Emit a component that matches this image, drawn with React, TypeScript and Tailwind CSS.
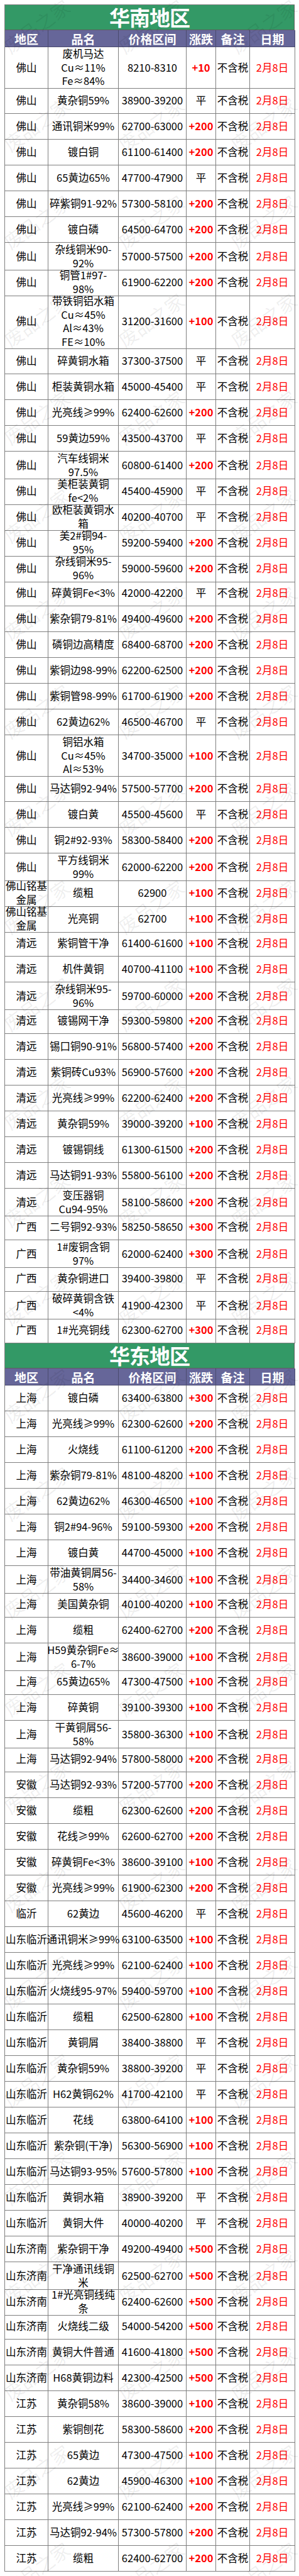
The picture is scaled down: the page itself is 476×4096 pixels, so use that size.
import React from "react";

type Row = [string, string, string, string, number?];

const south: Row[] = [
  ["佛山", "废机马达\nCu≈11%\nFe≈84%", "8210-8310", "+10", 3],
  ["佛山", "黄杂铜59%", "38900-39200", "平"],
  ["佛山", "通讯铜米99%", "62700-63000", "+200"],
  ["佛山", "镀白铜", "61100-61400", "+200"],
  ["佛山", "65黄边65%", "47700-47900", "平"],
  ["佛山", "碎紫铜91-92%", "57300-58100", "+200"],
  ["佛山", "镀白磷", "64500-64700", "+200"],
  ["佛山", "杂线铜米90-\n92%", "57000-57500", "+200"],
  ["佛山", "铜管1#97-\n98%", "61900-62200", "+200"],
  ["佛山", "带铁铜铝水箱\nCu≈45%\nAl≈43%\nFE≈10%", "31200-31600", "+100", 4],
  ["佛山", "碎黄铜水箱", "37300-37500", "平"],
  ["佛山", "柜装黄铜水箱", "45000-45400", "平"],
  ["佛山", "光亮线≥99%", "62400-62600", "+200"],
  ["佛山", "59黄边59%", "43500-43700", "平"],
  ["佛山", "汽车线铜米\n97.5%", "60800-61400", "+200"],
  ["佛山", "美柜装黄铜\nfe<2%", "45400-45900", "平"],
  ["佛山", "欧柜装黄铜水\n箱", "40200-40700", "平"],
  ["佛山", "美2#铜94-\n95%", "59200-59400", "+200"],
  ["佛山", "杂线铜米95-\n96%", "59000-59600", "+200"],
  ["佛山", "碎黄铜Fe<3%", "42000-42200", "平"],
  ["佛山", "紫杂铜79-81%", "49400-49600", "+200"],
  ["佛山", "磷铜边高精度", "68400-68700", "+200"],
  ["佛山", "紫铜边98-99%", "62200-62500", "+200"],
  ["佛山", "紫铜管98-99%", "61700-61900", "+200"],
  ["佛山", "62黄边62%", "46500-46700", "平"],
  ["佛山", "铜铝水箱\nCu≈45%\nAl≈53%", "34700-35000", "+100", 3],
  ["佛山", "马达铜92-94%", "57500-57700", "+200"],
  ["佛山", "镀白黄", "45500-45600", "平"],
  ["佛山", "铜2#92-93%", "58300-58400", "+200"],
  ["佛山", "平方线铜米\n99%", "62000-62200", "+200"],
  ["佛山铭基\n金属", "缆粗", "62900", "+100"],
  ["佛山铭基\n金属", "光亮铜", "62700", "+100"],
  ["清远", "紫铜管干净", "61400-61600", "+100"],
  ["清远", "机件黄铜", "40700-41100", "+100"],
  ["清远", "杂线铜米95-\n96%", "59700-60000", "+200"],
  ["清远", "镀锡网干净", "59300-59800", "+200"],
  ["清远", "锡口铜90-91%", "56800-57400", "+200"],
  ["清远", "紫铜砖Cu93%", "56900-57600", "+200"],
  ["清远", "光亮线≥99%", "62200-62400", "+200"],
  ["清远", "黄杂铜59%", "39000-39200", "+100"],
  ["清远", "镀锡铜线", "61300-61500", "+200"],
  ["清远", "马达铜91-93%", "55800-56100", "+200"],
  ["清远", "变压器铜\nCu94-95%", "58100-58600", "+200"],
  ["广西", "二号铜92-93%", "58250-58650", "+300"],
  ["广西", "1#废铜含铜\n97%", "62000-62400", "+300"],
  ["广西", "黄杂铜进口", "39400-39800", "平"],
  ["广西", "破碎黄铜含铁\n<4%", "41900-42300", "平"],
  ["广西", "1#光亮铜线", "62300-62700", "+300"],
];

const east: Row[] = [
  ["上海", "镀白磷", "63400-63800", "+300"],
  ["上海", "光亮线≥99%", "62300-62600", "+200"],
  ["上海", "火烧线", "61100-61200", "+200"],
  ["上海", "紫杂铜79-81%", "48100-48200", "+100"],
  ["上海", "62黄边62%", "46300-46500", "+100"],
  ["上海", "铜2#94-96%", "59100-59300", "+200"],
  ["上海", "镀白黄", "44700-45000", "+100"],
  ["上海", "带油黄铜屑56-\n58%", "34400-34600", "+100"],
  ["上海", "美国黄杂铜", "40100-40200", "+100"],
  ["上海", "缆粗", "62400-62700", "+200"],
  ["上海", "H59黄杂铜Fe≈\n6-7%", "38600-39000", "+100"],
  ["上海", "65黄边65%", "47300-47500", "+100"],
  ["上海", "碎黄铜", "39100-39300", "+100"],
  ["上海", "干黄铜屑56-\n58%", "35800-36300", "+100"],
  ["上海", "马达铜92-94%", "57800-58000", "+200"],
  ["安徽", "马达铜92-93%", "57200-57700", "+200"],
  ["安徽", "缆粗", "62300-62600", "+200"],
  ["安徽", "花线≥99%", "62600-62700", "+200"],
  ["安徽", "碎黄铜Fe<3%", "38600-39100", "+100"],
  ["安徽", "光亮线≥99%", "61900-62300", "+200"],
  ["临沂", "62黄边", "45600-46200", "平"],
  ["山东临沂", "通讯铜米≥99%", "63100-63500", "+100"],
  ["山东临沂", "光亮线≥99%", "62100-62400", "+100"],
  ["山东临沂", "火烧线95-97%", "59400-59700", "+100"],
  ["山东临沂", "缆粗", "62500-62800", "+100"],
  ["山东临沂", "黄铜屑", "38400-38800", "平"],
  ["山东临沂", "黄杂铜59%", "38800-39200", "平"],
  ["山东临沂", "H62黄铜62%", "41700-42100", "平"],
  ["山东临沂", "花线", "63800-64100", "+100"],
  ["山东临沂", "紫杂铜(干净)", "56300-56900", "+100"],
  ["山东临沂", "马达铜93-95%", "57600-57800", "+100"],
  ["山东临沂", "黄铜水箱", "38900-39200", "平"],
  ["山东临沂", "黄铜大件", "40000-40200", "平"],
  ["山东济南", "紫杂铜干净", "49200-49400", "+500"],
  ["山东济南", "干净通讯线铜\n米", "62500-62700", "+500"],
  ["山东济南", "1#光亮铜线纯\n条", "62400-62600", "+500"],
  ["山东济南", "火烧线二级", "54000-54200", "+500"],
  ["山东济南", "黄铜大件普通", "41600-41800", "+500"],
  ["山东济南", "H68黄铜边料", "42300-42500", "+500"],
  ["江苏", "黄杂铜58%", "38600-39000", "+100"],
  ["江苏", "紫铜刨花", "58300-58600", "+200"],
  ["江苏", "65黄边", "47300-47500", "+100"],
  ["江苏", "62黄边", "45900-46300", "+100"],
  ["江苏", "光亮线≥99%", "62100-62400", "+200"],
  ["江苏", "马达铜92-94%", "57300-57800", "+200"],
  ["江苏", "缆粗", "62400-62700", "+200"],
];

const rowH: Record<number, string> = {
  1: "h-[41px]",
  3: "h-[65px]",
  4: "h-[86px]",
};

const grid = "grid grid-cols-[69px_112px_108px_47px_54px_72px]";
const cell =
  "flex items-center justify-center text-center border-r border-b border-[#7f7f7f] whitespace-pre leading-[21.5px]";
const headCell =
  "flex items-center justify-center border-r border-b border-[#4a4a6e] whitespace-nowrap";

function Section({ title, rows }: { title: string; rows: Row[] }) {
  return (
    <div>
      <div className="flex h-[40px] items-center justify-center border-r border-b border-[#5d5d5d] bg-[#339966] text-[33px] font-bold leading-none tracking-[-1px] text-white">
        {title}
      </div>
      <div className={`${grid} h-[27px] bg-[#666699] text-[19px] font-bold leading-none text-white`}>
        {["地区", "品名", "价格区间", "涨跌", "备注", "日期"].map((h) => (
          <div key={h} className={headCell}>
            {h}
          </div>
        ))}
      </div>
      {rows.map((r, i) => {
        const flat = r[3] === "平";
        return (
          <div key={i} className={`${grid} ${rowH[r[4] ?? 1]} text-[16.5px] text-black`}>
            <div className={cell}>{r[0]}</div>
            <div className={cell}>{r[1]}</div>
            <div className={cell}>{r[2]}</div>
            <div className={`${cell} ${flat ? "" : "font-bold text-[#ff0000]"}`}>{r[3]}</div>
            <div className={cell}>不含税</div>
            <div className={`${cell} text-[#ff0000]`}>2月8日</div>
          </div>
        );
      })}
    </div>
  );
}

const wmCols = [58, 240, 419];
const wmRows = Array.from({ length: 27 }, (_, i) => 41 + i * 155.5);

export default function App() {
  return (
    <div className="relative w-[476px] overflow-hidden bg-white pt-[7px] pb-[8px] font-['Noto_Sans_CJK_SC','Noto_Sans',sans-serif]">
      <div className="mx-auto w-[462px] border-l border-t border-[#7f7f7f]">
        <Section title="华南地区" rows={south} />
        <Section title="华东地区" rows={east} />
      </div>
      <div className="pointer-events-none absolute inset-0">
        {wmRows.map((y, i) =>
          wmCols.map((x, j) => (
            <div
              key={`${i}-${j}`}
              className="absolute -translate-x-1/2 -translate-y-1/2 -rotate-[36deg] whitespace-nowrap text-[30px] leading-none text-black/[0.07]"
              style={{ left: x, top: y }}
            >
              废品之家
            </div>
          ))
        )}
      </div>
    </div>
  );
}
